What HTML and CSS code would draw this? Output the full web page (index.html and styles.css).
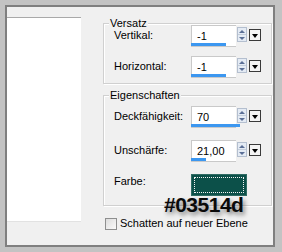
FILE: index.html
```html
<!DOCTYPE html>
<html lang="de">
<head>
  <meta charset="UTF-8">
  <title>Schlagschatten</title>
  <link rel="stylesheet" href="styles.css">
</head>
<body>

<div class="frame">
  <div class="dialog">
    <div class="preview"></div>

    <div class="settings">
      <div class="group group-offset">
        <div class="group-title">Versatz</div>
        <div class="row">
          <span class="label">Vertikal:</span>
          <div class="spin">
            <div class="field">-1</div>
            <div class="arrows"><span class="up"></span><span class="down"></span></div>
            <div class="drop"></div>
            <div class="bar" style="width: 35px"></div>
          </div>
        </div>
        <div class="row">
          <span class="label">Horizontal:</span>
          <div class="spin">
            <div class="field">-1</div>
            <div class="arrows"><span class="up"></span><span class="down"></span></div>
            <div class="drop"></div>
            <div class="bar" style="width: 35px"></div>
          </div>
        </div>
      </div>

      <div class="group group-props">
        <div class="group-title">Eigenschaften</div>
        <div class="row">
          <span class="label">Deckfähigkeit:</span>
          <div class="spin">
            <div class="field">70</div>
            <div class="arrows"><span class="up"></span><span class="down"></span></div>
            <div class="drop"></div>
            <div class="bar" style="width: 49px"></div>
          </div>
        </div>
        <div class="row">
          <span class="label">Unschärfe:</span>
          <div class="spin">
            <div class="field">21,00</div>
            <div class="arrows"><span class="up"></span><span class="down"></span></div>
            <div class="drop"></div>
            <div class="bar" style="width: 15px"></div>
          </div>
        </div>
        <div class="row row-color">
          <span class="label">Farbe:</span>
          <div class="swatch"><div class="focus"></div></div>
        </div>
      </div>

      <div class="check">
        <span class="box"></span>
        <span>Schatten auf neuer Ebene</span>
      </div>
    </div>

    <div class="hex">#03514d</div>
  </div>
</div>

</body>
</html>
```

FILE: styles.css
```css
* { box-sizing: border-box; }
body {
  margin: 0;
  font-family: 'Liberation Sans', Arial, sans-serif;
  font-size: 11px;
  color: #000;
  background: #c3c3c3;
}
.frame {
  width: 282px;
  height: 252px;
  background: #c3c3c3;
  padding: 5px 7px 5px 5px;
}
.dialog {
  position: relative;
  display: flex;
  align-items: flex-start;
  height: 100%;
  background: #f0f0f0;
  border: 2px solid #7f7f7f;
  padding-top: 10px;
}
.preview {
  width: 74px;
  height: 205px;
  background: #fff;
  border-top: 1px solid #a9a9a9;
  border-bottom: 1px solid #e2e2e2;
}
.settings {
  flex: 1;
  margin-left: 22px;
  margin-right: 1px;
}
.group {
  border: 1px solid #d0d0d0;
  box-shadow: inset 1px 1px 0 #fff, 1px 1px 0 #fff;
}
.group-offset {
  margin-top: 6px;
  padding-bottom: 5px;
}
.group-props {
  margin-top: 11px;
  padding-bottom: 9px;
}
.group-title {
  width: fit-content;
  margin: -7px 0 -5px 5px;
  padding: 0 1px;
  line-height: 13px;
  background: #f0f0f0;
}
.group-props .group-title {
  margin-bottom: 4px;
}
.row {
  display: flex;
  align-items: flex-start;
  padding-left: 10px;
  height: 22px;
}
.group-offset .row + .row { margin-top: 9px; }
.group-props .row + .row { margin-top: 12px; }
.label {
  width: 77px;
  padding-top: 4px;
  line-height: 13px;
}
.row-color .label { padding-top: 1px; }

.spin {
  position: relative;
  display: flex;
  align-items: flex-start;
  width: 70px;
  height: 22px;
}
.field {
  width: 46px;
  height: 22px;
  background: #fff;
  border: 1px solid #c9c9c9;
  border-right: none;
  padding: 4px 0 0 5px;
  line-height: 13px;
}
.arrows {
  display: flex;
  flex-direction: column;
  width: 10px;
  height: 15px;
  margin-top: 2px;
  margin-left: 1px;
  border: 1px solid #b4bfcf;
  background: #e4ebf4;
}
.arrows span {
  flex: 1;
  display: flex;
  align-items: center;
  justify-content: center;
}
.arrows .up::after,
.arrows .down::after {
  content: '';
  border-left: 3px solid transparent;
  border-right: 3px solid transparent;
}
.arrows .up::after { border-bottom: 3px solid #5a6f96; }
.arrows .down::after { border-top: 3px solid #5a6f96; }
.arrows .up { border-bottom: 1px solid #c4cedb; }
.drop {
  position: relative;
  width: 12px;
  height: 12px;
  margin-top: 4px;
  margin-left: 2px;
  border: 1px solid #3a3a3a;
  background: #f4f4f4;
}
.drop::after {
  content: '';
  position: absolute;
  left: 2px;
  top: 4px;
  border-left: 3px solid transparent;
  border-right: 3px solid transparent;
  border-top: 4px solid #000;
}
.bar {
  position: absolute;
  left: 0;
  bottom: 1px;
  height: 3px;
  background: #3c97f0;
}

.swatch {
  width: 56px;
  height: 22px;
  padding: 2px;
  background: #0c5049;
  border: 1px solid #2f6b63;
}
.focus {
  height: 100%;
  border: 1px dotted #f2f2f2;
}

.check {
  display: flex;
  align-items: center;
  gap: 3px;
  margin-top: 11px;
  padding-left: 2px;
  line-height: 13px;
}
.box {
  width: 12px;
  height: 12px;
  border: 1px solid #8e8f8f;
  background: linear-gradient(135deg, #dcdcdc, #fafafa);
}

.hex {
  position: absolute;
  left: 157px;
  top: 187px;
  font-family: 'Liberation Sans', Arial, sans-serif;
  font-weight: bold;
  font-size: 21px;
  line-height: 21px;
  letter-spacing: -0.5px;
  color: #0a0a0a;
  text-shadow: 2px 3px 4px rgba(0, 0, 0, 0.45);
}
```
